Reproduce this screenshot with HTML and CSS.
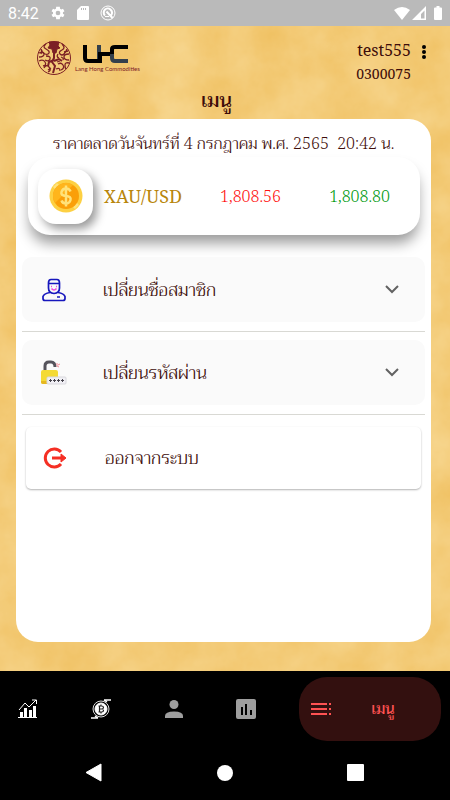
FILE: index.html
```html
<!DOCTYPE html>
<html lang="th">
<head>
  <meta charset="UTF-8" />
  <meta name="viewport" content="width=device-width, initial-scale=1.0"/>
  <title>Lang Hong Commodities</title>
  <link rel="stylesheet" href="styles.css">
</head>
<body>
  <div class="status-bar">
    <span class="clock">8:42</span>
    <svg width="16" height="16" viewBox="0 0 24 24" fill="#fff"><path d="M19.4 13a7.500 7.500 0 0 0 0-2l2.300-1.700-2.200-3.800-2.700 1.100a8 8 0 0 0-1.700-1L14.700 2.500H9.300l-.4 3.100a8 8 0 0 0-1.700 1L4.500 5.500 2.300 9.300 4.600 11a7.500 7.500 0 0 0 0 2l-2.300 1.700 2.200 3.800 2.700-1.100a8 8 0 0 0 1.700 1l.4 3.100h5.400l.4-3.100a8 8 0 0 0 1.700-1l2.700 1.100 2.200-3.800zM12 15.500a3.500 3.500 0 1 1 0-7 3.500 3.500 0 0 1 0 7z"/></svg>
    <svg width="12" height="14" viewBox="0 0 12 14"><path fill="#fff" d="M4 0h7a1 1 0 0 1 1 1v12a1 1 0 0 1-1 1H1a1 1 0 0 1-1-1V4z"/><path stroke="#bababa" d="M4.500 2v2M6.500 2v2M8.500 2v2"/></svg>
    <svg width="16" height="16" viewBox="0 0 16 16" fill="none" stroke="#fff"><circle cx="8" cy="8" r="7"/><path stroke-width="2" d="M5 10.500A4 4 0 0 1 10.500 4.600 4 4 0 0 1 11 10.500M6.500 6.500l6 6.500"/><path d="M5 11.500h4"/></svg>
    <span class="signals">
      <svg width="16" height="13" viewBox="0 0 16 13"><path fill="#fff" d="M0 3Q8-3 16 3L8 13z"/></svg>
      <svg width="14" height="14" viewBox="0 0 14 14"><path fill="#fff" fill-rule="evenodd" d="M14 0v14H0zM12.500 4.500L9 8v4.500h3.500z"/></svg>
      <svg class="battery" width="8" height="14" viewBox="0 0 8 14"><path fill="#fff" d="M2.500 0h3v1.500H7a1 1 0 0 1 1 1V13a1 1 0 0 1-1 1H1a1 1 0 0 1-1-1V2.500a1 1 0 0 1 1-1h1.500z"/></svg>
    </span>
  </div>

  <div class="app">
    <svg class="paper" aria-hidden="true">
      <filter id="grain"><feTurbulence type="fractalNoise" baseFrequency="0.02" numOctaves="5" seed="4"/><feColorMatrix values="0 0 0 0 1  0 0 0 0 .86  0 0 0 0 .54  .5 0 0 0 .1"/></filter>
      <rect width="100%" height="100%" filter="url(#grain)"/>
    </svg>
    <header>
      <div class="logo">
        <svg width="36" height="36" viewBox="0 0 36 36" fill="none" stroke="#7c2025">
          <circle cx="18" cy="18" r="16.500"/>
          <path fill="#7c2025" d="M13 2h10l-1 4 2 2-3 1-1 4h-3l-1-4-4-1 2-3z"/>
          <path stroke-width="2" d="M18 10v8l-2 4 3 4-2 7M18 20l-5 2-1 4M18 21l5-2 3 2"/>
          <path stroke-width="1.300" d="M10 4q-4 3 0 5t3 4-4 1-4-5M3 13q5-2 5 1t-5 3M10 16q5 0 4 3t-5 1M3 21q4-2 6 1t-2 4M8 28q2-4 5-1t-1 5M15 28l-3 2M26 4q4 4 0 6t-2 4 4 0 3-5M22 14q-2 3 1 4M33 14q-5 0-5 3t5 3M25 17q3 1 2 3M22 24q3-2 5 1t-2 5M33 23q-4-1-4 2t1 4M20 29q4-2 4 2M21 22l3-1M28 12l4-1M6 10l-1 4"/>
        </svg>
        <div class="brand">
          <svg width="46" height="18" viewBox="0 0 46 18" fill="none" stroke-width="4">
            <path stroke="#34404c" d="M16 0v14"/>
            <path stroke="#000" d="M2 0v13q0 3 3 3h9M13 16h4V9h12V4q0-2 3-2h13"/>
            <path stroke="#34404c" d="M29 9v4q0 3 3 3h13"/>
          </svg>
          <span>Lang Hong Commodities</span>
        </div>
      </div>
      <div class="account">
        <div class="user">test555</div>
        <div class="user-id">0300075</div>
      </div>
      <button class="more" aria-label="More">
        <svg width="6" height="16" viewBox="0 0 6 16"><circle cx="3" cy="3" r="2"/><circle cx="3" cy="8" r="2"/><circle cx="3" cy="13" r="2"/></svg>
      </button>
    </header>
    <h1>เมนู</h1>

    <main>
      <p class="market-date">ราคาตลาดวันจันทร์ที่ 4 กรกฎาคม พ.ศ. 2565 &nbsp;20:42 น.</p>
      <section class="price">
        <div class="coin">
          <svg width="34" height="34" viewBox="0 0 34 34">
            <circle cx="17" cy="17" r="16.500" fill="#fdd043"/>
            <path fill="#ffe37d" d="M4 8L8 4l22 22-4 4z"/>
            <circle cx="17" cy="17" r="13" fill="#fa9f09"/>
            <path fill="#ffb51c" d="M6 24A13 13 0 0 1 24 6z"/>
            <path fill="none" stroke="#ffe27a" stroke-width="2.500" d="M21.500 12.500q-1-3-4.500-3t-4.500 3.500 4.500 4 4.500 4-4.500 3.500-4.500-3M17 6.500v21"/>
          </svg>
        </div>
        <span class="symbol">XAU/USD</span>
        <span class="bid">1,808.56</span>
        <span class="ask">1,808.80</span>
      </section>

      <div class="tile-row">
        <button class="tile" aria-expanded="false">
          <svg width="24" height="24" viewBox="0 0 24 24" fill="none" stroke="#1717bd" stroke-width="1.700">
            <path d="M6.500 5Q6.500 1.500 9 1.500h6q2.500 0 2.500 3.500v5q0 5-5.500 5.500Q6.500 15 6.500 10zM7 5.500h10"/>
            <path d="M8 14.500q-6 1-7 4v2q0 2 2 2h18q2 0 2-2v-2q-1-3-7-4M15 19h3"/>
            <path stroke="#ef4de0" d="M9 8.500h1M14 8.500h1M9.500 10.500q2.500 3 5 0"/>
          </svg>
          <span>เปลี่ยนชื่อสมาชิก</span>
          <svg class="chevron" width="14" height="9" viewBox="0 0 14 9"><path d="M1 1l6 6 6-6"/></svg>
        </button>
      </div>
      <div class="tile-row">
        <button class="tile" aria-expanded="false">
          <svg width="26" height="25" viewBox="0 0 26 25">
            <path fill="none" stroke="#55535b" stroke-width="3" d="M4 11V6q0-4 4-4h2q4 0 4 5"/>
            <path stroke="#f48b96" d="M16 3v3M18 7l-2-1M19 4l-2 1"/>
            <rect y="10" width="17" height="14" rx="2" fill="#f4da35"/>
            <path fill="#e6b821" d="M0 21h8v3H2q-2 0-2-2z"/>
            <rect x="6" y="17" width="19" height="7" rx="1" fill="#f1f0f5" stroke="#d8d7dc"/>
            <path fill="none" stroke="#47454d" stroke-width="1" d="M8 20.500h3M9.500 19v3M12 20.500h3M13.500 19v3M16 20.500h3M17.500 19v3M20 20.500h3M21.500 19v3"/>
          </svg>
          <span>เปลี่ยนรหัสผ่าน</span>
          <svg class="chevron" width="14" height="9" viewBox="0 0 14 9"><path d="M1 1l6 6 6-6"/></svg>
        </button>
      </div>
      <button class="logout">
        <svg width="24" height="22" viewBox="0 0 24 22" fill="none" stroke="#f52f24" stroke-width="3"><path d="M18 5A9 9 0 1 0 18 17"/><path d="M9 11h10"/><path fill="#f52f24" stroke-width="1" d="M18 7l5 4-5 4z"/></svg>
        <span>ออกจากระบบ</span>
      </button>
    </main>
  </div>

  <nav class="tabs">
    <button aria-label="Market">
      <svg width="20" height="20" viewBox="0 0 20 20"><path fill="#fff" d="M2 18V13h3v5h1V9h3v9h2v-7h3v7h1V7h3v11H19v1H0v-1z"/><path fill="none" stroke="#fff" d="M1 11l6-7 4 4 7-7M14 1h4.500v4"/></svg>
    </button>
    <button aria-label="Trade">
      <svg width="22" height="20" viewBox="0 0 22 20" fill="none" stroke="#ddd"><circle cx="11" cy="10" r="8"/><circle cx="11" cy="10" r="6" fill="#fff" stroke="#fff"/><path stroke="#222" stroke-width="1.200" d="M8.500 7h3q2 0 2 1.500T11.500 10H9.500h2q2 0 2 1.500T11.500 13h-3M9.500 7v6M11 5.500V7M11 13v1.500"/><path stroke="#fff" stroke-width="1.500" d="M14 1h7M1 19h7M14 1l3 2M8 19l-3-2"/></svg>
    </button>
    <button aria-label="Account">
      <svg width="18" height="18" viewBox="0 0 18 18" fill="#9e9e9e"><circle cx="9" cy="4.500" r="4.500"/><path d="M0 18v-2q0-4.500 9-4.500t9 4.500v2z"/></svg>
    </button>
    <button aria-label="Report">
      <svg width="20" height="20" viewBox="0 0 20 20"><rect width="20" height="20" rx="2" fill="#9e9e9e"/><path stroke="#000" stroke-width="2" d="M6 8v8M10 5v11M15 11v5"/></svg>
    </button>
    <button class="active">
      <svg width="20" height="12" viewBox="0 0 20 12" stroke="#ff5252" stroke-width="2"><path d="M0 1h16M0 6h16M0 11h16M18 1h2M18 6h2M18 11h2"/></svg>
      <span>เมนู</span>
    </button>
  </nav>

  <div class="system-nav">
    <button aria-label="Back"><svg width="18" height="20" viewBox="0 0 18 20"><path d="M16 1v17L1 9.500z" fill="#fff" stroke="#fff" stroke-linejoin="round"/></svg></button>
    <button aria-label="Home"><svg width="18" height="18"><circle cx="9" cy="9" r="8" fill="#fff"/></svg></button>
    <button aria-label="Recent"><svg width="18" height="18"><rect width="17" height="17" rx="1" fill="#fff"/></svg></button>
  </div>
</body>
</html>
```

FILE: styles.css
```css
* {
    box-sizing: border-box;
    margin: 0;
    padding: 0;
}
body {
    font-family: 'Noto Serif', Trirong, 'Liberation Serif', serif;
    color: #3e0d0a;
    background: #000;
    min-height: 100vh;
    display: flex;
    flex-direction: column;
}

button {
    font: inherit;
    color: inherit;
    background: none;
    border: none;
    cursor: pointer;
}

svg {
    display: block;
    flex-shrink: 0;
}

.status-bar {
    height: 26px;
    padding: 0 8px;
    background: #bababa;
    color: #fff;
    display: flex;
    align-items: center;
    gap: 11px;
}

.clock {
    font-family: Roboto, sans-serif;
    font-size: 16px;
    width: 31px;
}

.signals {
    margin-left: auto;
    display: flex;
    align-items: center;
    gap: 2px;
}

.battery {
    margin-left: 6px;
}

.app {
    position: relative;
    z-index: 0;
    flex: 1;
    padding: 12px 19px 29px 16px;
    background: #edb850;
    display: flex;
    flex-direction: column;
}

.paper {
    position: absolute;
    top: 0;
    left: 0;
    width: 100%;
    height: 100%;
    z-index: -1;
}

header {
    display: flex;
    align-items: flex-start;
    padding-left: 20px;
}

.logo {
    display: flex;
    gap: 3px;
    padding-top: 2px;
}

.brand {
    padding-top: 5px;
}

.brand svg {
    margin-left: 8px;
}

.brand span {
    display: block;
    font-family: Lato, sans-serif;
    font-size: 6px;
    line-height: 12px;
    color: #7c2025;
    white-space: nowrap;
}

.account {
    margin-left: auto;
    text-align: right;
    line-height: 24px;
}

.user {
    font-size: 16px;
}

.user-id {
    font-size: 14px;
}

.more {
    padding: 6px 4px 6px 10px;
}

h1 {
    font-size: 20px;
    line-height: 27px;
    font-weight: 500;
    text-align: center;
    padding: 0 14px 6px 0;
}

main {
    flex: 1;
    background: #fff;
    border-radius: 22px;
    padding: 10px 6px;
}

.market-date {
    font-size: 16px;
    font-weight: 300;
    line-height: 28px;
    text-align: center;
    white-space: nowrap;
}

.price {
    display: flex;
    align-items: center;
    height: 78px;
    margin: 0 5px 22px 6px;
    padding: 0 30px 0 10px;
    border-radius: 22px;
    background: #fff;
    box-shadow: 0 10px 14px -2px rgba(0,0,0,0.4);
}

.coin {
    width: 55px;
    height: 55px;
    border-radius: 18px;
    background: #fff;
    display: flex;
    align-items: center;
    justify-content: center;
    box-shadow: 4px 5px 10px rgba(0,0,0,0.4);
}

.symbol {
    font-size: 18px;
    color: #b8860b;
    margin-left: 11px;
}

.bid, .ask {
    font-size: 16px;
    font-weight: 300;
}

.bid {
    color: #ff1010;
    margin-left: 38px;
}

.ask {
    color: #009a10;
    margin-left: auto;
}

.tile-row {
    padding-bottom: 9px;
    margin-bottom: 8px;
    border-bottom: 1px solid #d9d9d4;
}

.tile {
    width: 100%;
    height: 65px;
    padding: 0 26px 0 19px;
    border-radius: 10px;
    background: #fafafa;
    display: flex;
    align-items: center;
    font-size: 18px;
    font-weight: 300;
}

.tile span {
    flex: 1;
    text-align: left;
}

.tile svg:first-child {
    width: 26px;
    margin-right: 36px;
}

.chevron {
    fill: none;
    stroke: #626262;
    stroke-width: 2;
}

.logout {
    width: calc(100% - 8px);
    height: 62px;
    margin: 12px 4px;
    padding: 0 17px;
    border-radius: 5px;
    background: #fff;
    box-shadow: 0 1px 2px rgba(0,0,0,0.3);
    display: flex;
    align-items: center;
    gap: 38px;
    font-size: 18px;
    font-weight: 300;
}

.tabs {
    display: flex;
    align-items: center;
    justify-content: space-between;
    padding: 6px 9px 4px 8px;
}

.tabs button {
    width: 40px;
    height: 64px;
    display: flex;
    align-items: center;
    justify-content: center;
}

.tabs .active {
    width: 142px;
    padding: 0 6px 0 12px;
    border-radius: 28px;
    background: #33100f;
    color: #ff5252;
    justify-content: flex-start;
    font-size: 15px;
    font-weight: 500;
}

.active span {
    flex: 1;
    text-align: center;
}

.system-nav {
    height: 55px;
    padding: 0 29px;
    display: flex;
    align-items: center;
}

.system-nav button {
    flex: 1;
    display: flex;
    justify-content: center;
}
```
